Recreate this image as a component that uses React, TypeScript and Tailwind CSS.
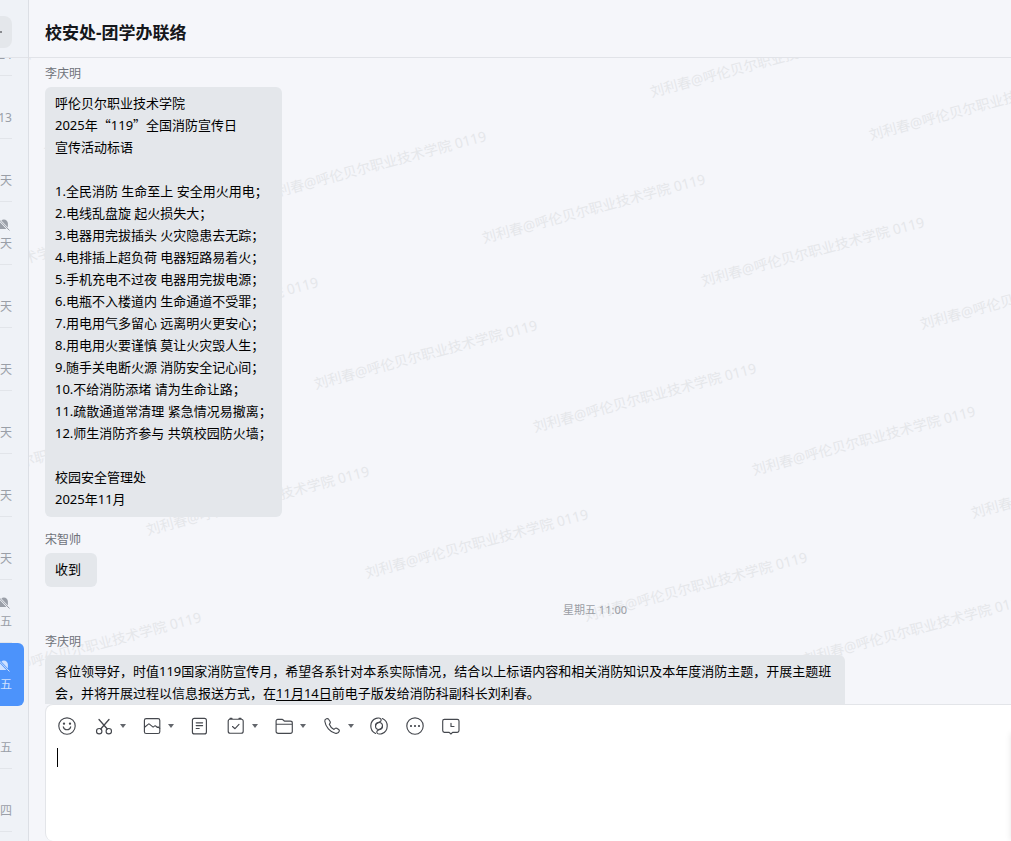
import type { ReactNode } from "react";

type Chat = { time: string; muted?: boolean; active?: boolean };

const chats: Chat[] = [
  { time: "14:24" },
  { time: "11:13" },
  { time: "昨天" },
  { time: "昨天", muted: true },
  { time: "昨天" },
  { time: "昨天" },
  { time: "昨天" },
  { time: "昨天" },
  { time: "昨天" },
  { time: "星期五", muted: true },
  { time: "星期五", muted: true, active: true },
  { time: "星期五" },
  { time: "星期四" },
];

const slogans = [
  "1.全民消防 生命至上 安全用火用电；",
  "2.电线乱盘旋 起火损失大；",
  "3.电器用完拔插头 火灾隐患去无踪；",
  "4.电排插上超负荷 电器短路易着火；",
  "5.手机充电不过夜 电器用完拔电源；",
  "6.电瓶不入楼道内 生命通道不受罪；",
  "7.用电用气多留心 远离明火更安心；",
  "8.用电用火要谨慎 莫让火灾毁人生；",
  "9.随手关电断火源 消防安全记心间；",
  "10.不给消防添堵 请为生命让路；",
  "11.疏散通道常清理 紧急情况易撤离；",
  "12.师生消防齐参与 共筑校园防火墙；",
];

// Diagonal grid of watermark origins inside the message pane.
const marks: { x: number; y: number }[] = [];
for (let row = -1; row < 6; row++) {
  for (let col = -3; col < 6; col++) {
    const x = 624 + col * 219 - row * 168;
    const y = 24 + col * 43 + row * 146;
    if (x > -225 && x < 1600 && y > -20 && y < 690) marks.push({ x, y });
  }
}

function Svg({ children }: { children: ReactNode }) {
  return (
    <svg width="20" height="20" viewBox="0 0 20 20" fill="none" stroke="#45484e" strokeWidth="1.15" strokeLinecap="round" strokeLinejoin="round" aria-hidden="true">
      {children}
    </svg>
  );
}

const tools: { name: string; menu?: boolean; icon: ReactNode }[] = [
  {
    name: "表情",
    icon: (
      <>
        <circle cx="10" cy="10" r="8.2" />
        <path d="M6.3 10.8a3.8 3.8 0 0 0 7.4 0" />
        <circle cx="7" cy="7.6" r=".6" fill="#45484e" />
        <circle cx="13" cy="7.6" r=".6" fill="#45484e" />
      </>
    ),
  },
  {
    name: "截图",
    menu: true,
    icon: (
      <>
        <circle cx="6.2" cy="15.2" r="2.7" />
        <circle cx="15.8" cy="15.2" r="2.7" />
        <path d="M6 3.5l8.300 9.500M16 3.500L7.700 13" strokeWidth="1.300" />
      </>
    ),
  },
  {
    name: "图片",
    menu: true,
    icon: (
      <>
        <rect x="3.4" y="2.6" width="15.4" height="14.9" rx="1.8" />
        <path d="M3.6 11.2l3.8-3.1a.8.8 0 0 1 1 0l3.7 3 1.6-1.2a.8.8 0 0 1 1 .1l1.8 1.5.8-.5 1.4 1.3" />
      </>
    ),
  },
  {
    name: "文档",
    icon: (
      <>
        <rect x="3.4" y="2.3" width="14" height="15.6" rx="2" />
        <path d="M7.2 6.8h6.4M7.2 9.6h6.4M7.2 12.5h3" />
      </>
    ),
  },
  {
    name: "任务",
    menu: true,
    icon: (
      <>
        <rect x="3.2" y="3.2" width="15" height="14" rx="2" />
        <path d="M5 2.4h2M14 2.4h2M7.5 10.5l2.5 2.2 4-4.3" />
      </>
    ),
  },
  {
    name: "文件",
    menu: true,
    icon: (
      <>
        <path d="M3.1 5a1.7 1.7 0 0 1 1.7-1.7h4.4c.8 0 1.1.9 1.8 1.4.4.3.8.4 1.3.4h5c1.2 0 2 .7 2 1.8v8.5c0 1.1-.8 1.9-2 1.9H5.1c-1.2 0-2-.8-2-1.9zM3.2 8.2h16" />
      </>
    ),
  },
  {
    name: "通话",
    menu: true,
    icon: (
      <path d="M5.4 2.7c-1 .3-1.8 1.3-1.6 2.6.7 5.5 5.3 10.9 10.4 12 1.8.4 3.6-.4 4.1-2.1.2-.7 0-1.2-.6-1.6l-2-1.3c-.5-.3-1-.3-1.5.1l-1.2 1c-2-.9-3.9-3-4.7-5.1l.8-1.1c.3-.5.3-1 .1-1.5L7.6 3.3c-.4-.7-1.2-.9-2.200-.6z" />
    ),
  },
  {
    name: "应用",
    icon: (
      <>
        <circle cx="10" cy="10" r="3.500" />
        <path d="M6.600 17.500A8.200 8.200 0 0 1 7 2.400c1.900-.8 4.300-.4 5 .9.7 1.400-.6 2.500-2.200 3.100C7.800 7.100 6.500 8.400 6.500 10" />
        <path d="M13.400 2.500A8.200 8.200 0 0 1 13 17.600c-1.900.8-4.300.4-5-.9-.7-1.400.6-2.500 2.200-3.100 2-.7 3.300-2 3.300-3.600" />
      </>
    ),
  },
  {
    name: "更多",
    icon: (
      <>
        <circle cx="10" cy="10" r="8.2" />
        <circle cx="6" cy="10" r=".5" fill="#45484e" />
        <circle cx="10" cy="10" r=".5" fill="#45484e" />
        <circle cx="14" cy="10" r=".5" fill="#45484e" />
      </>
    ),
  },
  {
    name: "消息记录",
    icon: (
      <>
        <path d="M3.4 3.4h12.900c1 0 1.700.7 1.700 1.700v9.500c0 1-.7 1.700-1.700 1.700h-4.700L9.900 18l-1.700-1.700H3.400c-1 0-1.700-.7-1.700-1.700V5.100c0-1 .7-1.700 1.700-1.700z" />
        <path d="M10 7.200v3.300h3" />
      </>
    ),
  },
];

function MutedBell() {
  return (
    <svg width="12" height="12" viewBox="0 0 12 12" aria-hidden="true" className="shrink-0">
      <path d="M1.200.8L11.200 11.200" stroke="currentColor" strokeWidth="1" strokeLinecap="round" />
      <path d="M3.400 1.600C4 .9 4.900.6 5.800.6 8.200.6 9.900 2.400 9.900 4.600v3.800zM1.900 3.100L8.400 9.900H.5v-.8l1.300-1.500z" fill="currentColor" />
    </svg>
  );
}

function Message({ author, children }: { author: string; children: ReactNode }) {
  return (
    <article className="flex flex-col items-start">
      <h2 className="mb-[3px] text-xs leading-5 text-[#70737a]">{author}</h2>
      <div className="min-w-[52px] max-w-[800px] rounded-md bg-[#e4e7eb] px-[10px] pt-[5px] pb-[7px] text-[13px] leading-[22px] text-black">{children}</div>
    </article>
  );
}

export default function App() {
  return (
    <div className="flex h-screen overflow-hidden bg-[#f5f6fa] font-['Noto_Sans','Noto_Sans_CJK_SC',sans-serif]">
      <aside className="flex w-[29px] shrink-0 flex-col overflow-hidden border-r border-[#dcdfe5] bg-[#eff2f7]">
        <div className="flex h-[58px] shrink-0 items-center justify-end border-b border-[#e1e3e8] pr-4 pb-2 pt-[15px]">
          <button aria-label="新建" className="flex size-8 shrink-0 items-center justify-center rounded-lg bg-[#e4e7eb] text-[#2c2e33]">
            <svg width="14" height="14" viewBox="0 0 14 14" stroke="currentColor" strokeWidth="1.2" aria-hidden="true">
              <path d="M0 7h13M6.500 1v12" />
            </svg>
          </button>
        </div>
        <nav className="flex min-h-0 flex-1 flex-col overflow-hidden">
          <ul className="-mt-[45px] flex flex-col">
            {chats.map((c, i) => (
              <li key={i} className={c.active ? "mr-1 shrink-0 rounded-r-md bg-[#4c93fb] text-[#cfe1ff]" : "mr-4 shrink-0 border-b border-[#e2e5ea] text-[#9a9fa8]"}>
                <a href="#chat" className={c.active ? "flex h-[63px] flex-col items-end justify-end pr-3 pb-3" : "flex h-[62px] flex-col items-end justify-end pb-[11px]"}>
                  {c.muted && <span className="mr-[2px] mb-[4px]"><MutedBell /></span>}
                  <span className="whitespace-nowrap text-xs leading-[18px]">{c.time}</span>
                </a>
              </li>
            ))}
          </ul>
        </nav>
      </aside>

      <main className="flex min-w-0 flex-1 flex-col">
        <header className="flex h-[58px] shrink-0 items-center border-b border-[#e1e3e8] px-4 pt-2">
          <h1 className="text-[17px] font-bold leading-6 text-[#15171b]">校安处-团学办联络</h1>
        </header>

        <section className="relative min-h-0 flex-1 overflow-hidden">
          <div aria-hidden="true" className="pointer-events-none absolute inset-0 overflow-hidden">
            {marks.map((m, i) => (
              <span key={i} className="absolute origin-bottom-left -rotate-[15deg] whitespace-nowrap text-sm leading-5 text-[#e5e7ea]" style={{ left: m.x, top: m.y }}>
                刘利春@呼伦贝尔职业技术学院 0119
              </span>
            ))}
          </div>

          <div className="relative flex flex-col px-4 pt-[6px]">
            <Message author="李庆明">
              <p>呼伦贝尔职业技术学院</p>
              <p>
                2025年<span className="font-['Noto_Sans_CJK_SC',sans-serif]">“</span>119<span className="font-['Noto_Sans_CJK_SC',sans-serif]">”</span>全国消防宣传日
              </p>
              <p>宣传活动标语</p>
              <ol className="my-[22px]">
                {slogans.map((s) => (
                  <li key={s}>{s}</li>
                ))}
              </ol>
              <p>校园安全管理处</p>
              <p>2025年11月</p>
            </Message>
            <div className="mt-[13px]">
              <Message author="宋智帅">收到</Message>
            </div>
            <time className="mt-[14px] block pl-[150px] text-center text-[11px] leading-[18px] text-[#9b9ea5]">星期五 11:00</time>
            <div className="mt-[13px]">
              <Message author="李庆明">
                <p>
                  各位领导好，时值119国家消防宣传月，希望各系针对本系实际情况，结合以上标语内容和相关消防知识及本年度消防主题，开展主题班会，并将开展过程以信息报送方式，在<u className="underline-offset-2">11月14日</u>前电子版发给消防科副科长刘利春。
                </p>
              </Message>
            </div>
          </div>
        </section>

        <footer className="relative ml-4 flex h-[137px] shrink-0 flex-col overflow-hidden rounded-l-lg border-t border-l border-[#e3e5e9] bg-white">
          <div role="toolbar" className="flex h-[41px] shrink-0 items-center gap-[15px] pl-[11px]">
            {tools.map((t) => (
              <button key={t.name} aria-label={t.name} className={t.menu ? "flex w-[33px] items-center justify-between" : "flex w-[21px] items-center"}>
                <Svg>{t.icon}</Svg>
                {t.menu && (
                  <svg width="6" height="4" viewBox="0 0 6 4" fill="#63666c" aria-hidden="true">
                    <path d="M0 0h6L3 4z" />
                  </svg>
                )}
              </button>
            ))}
          </div>
          <div className="relative min-h-0 flex-1">
            <textarea aria-label="输入消息" className="block size-full resize-none bg-transparent px-[11px] py-[2px] text-[13px] leading-[22px] caret-transparent outline-none" />
            <span aria-hidden="true" className="pointer-events-none absolute left-[11px] top-[2px] h-[19px] w-px bg-black" />
          </div>
          <div aria-hidden="true" className="pointer-events-none absolute top-7 -right-2 bottom-0 w-2 shadow-[0_0_6px_rgba(0,0,0,0.10)]" />
        </footer>
      </main>
    </div>
  );
}
